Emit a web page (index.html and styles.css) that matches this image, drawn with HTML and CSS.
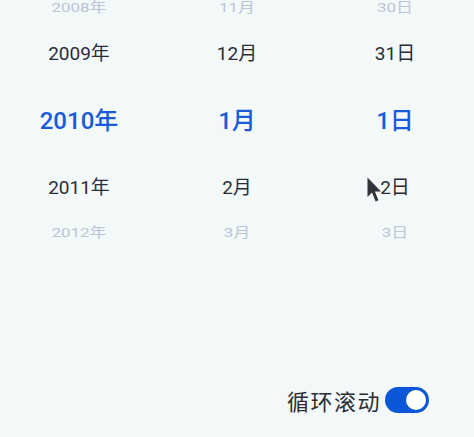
FILE: index.html
```html
<!DOCTYPE html>
<html lang="zh-CN">
<head>
    <meta charset="UTF-8">
    <meta name="viewport" content="width=device-width, initial-scale=1.0">
    <title>日期选择</title>
    <link rel="stylesheet" href="styles.css">
</head>
<body>
    <div class="page">
        <div class="picker">
            <div class="col">
                <div class="item far">2008年</div>
                <div class="item near">2009年</div>
                <div class="item current">2010年</div>
                <div class="item near">2011年</div>
                <div class="item far">2012年</div>
            </div>
            <div class="col">
                <div class="item far">11月</div>
                <div class="item near">12月</div>
                <div class="item current">1月</div>
                <div class="item near">2月</div>
                <div class="item far">3月</div>
            </div>
            <div class="col">
                <div class="item far">30日</div>
                <div class="item near">31日</div>
                <div class="item current">1日</div>
                <div class="item near">2日</div>
                <div class="item far">3日</div>
            </div>
        </div>
        <div class="footer">
            <span class="label">循环滚动</span>
            <div class="switch on"><span class="knob"></span></div>
        </div>
        <svg class="cursor" width="15" height="26" viewBox="0 0 15 26">
            <path d="M0.5 0.5 L0.5 20 L5 15.5 L8.6 24.5 L11.4 23.3 L7.9 14.6 L14 14.6 Z" fill="#30333b"/>
        </svg>
    </div>
</body>
</html>
```

FILE: styles.css
```css
* {
    margin: 0;
    padding: 0;
    box-sizing: border-box;
}
body {
    background: #f3f8f9;
    font-family: Roboto, "Noto Sans CJK SC", sans-serif;
    color: #2a2d35;
}
.page {
    position: relative;
    width: 474px;
    height: 437px;
    overflow: hidden;
}
.picker {
    display: grid;
    grid-template-columns: repeat(3, 158px);
    height: 246px;
    overflow: hidden;
}
.col {
    display: flex;
    flex-direction: column;
    align-items: center;
    margin-top: -18px;
}
.item {
    display: flex;
    align-items: center;
    justify-content: center;
    height: 46px;
    white-space: nowrap;
}
.far {
    font-size: 17px;
    color: #bac6d8;
    transform: scaleY(.8);
}
.far:first-child {
    margin-top: 2px;
    height: 44px;
}
.near {
    font-size: 19px;
}
.current {
    height: 88px;
    font-size: 24px;
    font-weight: 500;
    color: #1a5ad8;
}
.footer {
    display: flex;
    align-items: center;
    justify-content: flex-end;
    gap: 4px;
    margin-top: 138px;
    padding-right: 45px;
}
.label {
    font-family: "Noto Sans CJK SC", sans-serif;
    font-size: 22px;
    letter-spacing: 1.5px;
}
.switch {
    display: flex;
    align-items: center;
    width: 44px;
    height: 26px;
    padding: 3px;
    border-radius: 13px;
    background: #0b57d8;
}
.switch.on {
    justify-content: flex-end;
}
.knob {
    width: 20px;
    height: 20px;
    border-radius: 50%;
    background: #fff;
}
.cursor {
    position: absolute;
    left: 367px;
    top: 177px;
}
```
